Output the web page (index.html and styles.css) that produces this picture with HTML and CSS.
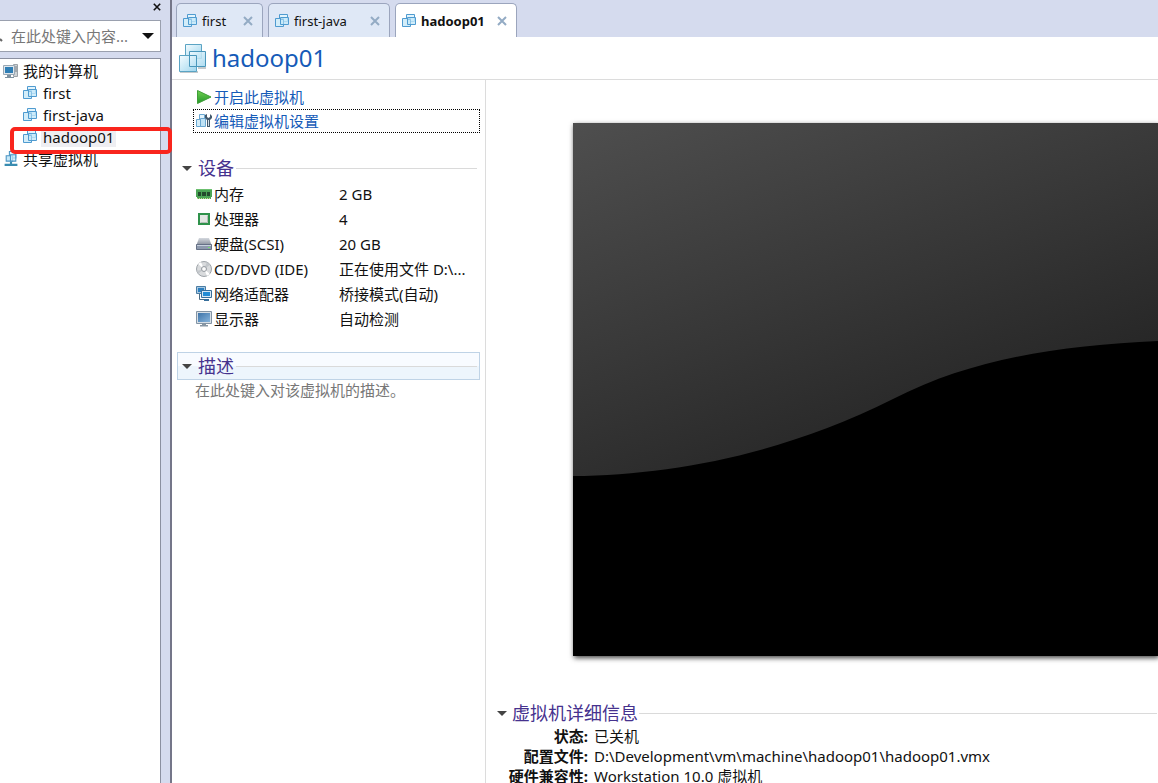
FILE: index.html
```html
<!DOCTYPE html>
<html lang="zh-CN">
<head>
<meta charset="utf-8">
<meta name="viewport" content="width=device-width, initial-scale=1">
<title>hadoop01</title>
<link rel="stylesheet" href="styles.css">
</head>
<body>
<svg class="defs" aria-hidden="true">
  <defs>
    <linearGradient id="pane" x1="0" y1="0" x2="1" y2="1"><stop offset="0" stop-color="#f4fcff"/><stop offset="1" stop-color="#9fd6ee"/></linearGradient>
    <linearGradient id="go" x1="0" y1="0" x2="0" y2="1"><stop offset="0" stop-color="#6fd04f"/><stop offset="1" stop-color="#23962a"/></linearGradient>
    <linearGradient id="metal" x1="0" y1="0" x2="0" y2="1"><stop offset="0" stop-color="#d5d9df"/><stop offset="1" stop-color="#878e9b"/></linearGradient>
    <linearGradient id="lcd" x1="0" y1="0" x2="1" y2="1"><stop offset="0" stop-color="#3f74a8"/><stop offset="1" stop-color="#86b4dc"/></linearGradient>
    <symbol id="vm" viewBox="0 0 14 14">
      <path d="M4.500.500h8v7h-8z" fill="#e3f4fc" stroke="#4f9bd0"/>
      <path d="M.500 4.500h8v8h-8z" fill="#d3edf9" stroke="#4f9bd0"/>
      <path d="M5.500 3.500h8v7h-8z" fill="#c6e9f9" fill-opacity=".8" stroke="#4f9bd0"/>
      <path d="M6 5.500h2.500V10" fill="none" stroke="#8cc3e6"/>
    </symbol>
    <symbol id="vm-large" viewBox="0 0 28 29">
      <path d="M1 28h18M27 24H19" stroke="#8b969c" stroke-width="2" opacity=".5"/>
      <path d="M6.500.500h16v14h-16z" fill="url(#pane)" stroke="#5ba4c4"/>
      <path d="M.500 11.500h17v16H.500z" fill="url(#pane)" stroke="#5ba4c4"/>
      <path d="M10.500 7.500h16v15h-16z" fill="url(#pane)" fill-opacity=".85" stroke="#4a97bb"/>
      <path d="M11 11.500h6.500V22" fill="none" stroke="#4a97bb"/>
    </symbol>
    <symbol id="close" viewBox="0 0 10 10"><path d="M1 1l8 8M9 1L1 9" stroke="currentColor" stroke-width="2" fill="none"/></symbol>
    <symbol id="down" viewBox="0 0 12 6"><path d="M0 0h12L6 6z" fill="currentColor"/></symbol>
    <symbol id="computer" viewBox="0 0 16 16">
      <path d="M10.500 1.500h4v12h-4z" fill="#cfd3d6" stroke="#9da3a8"/><path d="M12 4h2M12 6h2M12 8h2" stroke="#777f86"/>
      <path d="M.500 2.500h11v9H.500z" fill="#dfe6ec" stroke="#9aa8b4"/><path d="M2 4h8v6H2z" fill="#2f7eb5"/>
      <path d="M4 12h4v2h3v1H2v-1h2z" fill="#7e909e"/>
    </symbol>
    <symbol id="shared" viewBox="0 0 12 15">
      <path d="M4.500.500h6v6h-6z" fill="#e3f4fc" stroke="#4a94c4"/><path d="M1.500 4.500h6v5h-6z" fill="#c6e9f9" stroke="#4a94c4"/>
      <path d="M5.500 3.500h5v6h-5z" fill="#c6e9f9" fill-opacity=".7" stroke="#4a94c4"/>
      <path d="M6 10v3M0 13h12" stroke="#388bb0" stroke-width="2"/>
    </symbol>
    <symbol id="play" viewBox="0 0 16 16"><path d="M1.500 1.500L15 8 1.500 14.500z" fill="url(#go)" stroke="#3f9e38"/></symbol>
    <symbol id="edit" viewBox="0 0 16 16">
      <path d="M3.500 1.500h5v5h-5z" fill="#e3f4fc" stroke="#6aa7d1"/><path d="M.500 6.500h6v7h-6z" fill="#d3edf9" stroke="#6aa7d1"/><path d="M4.500 5.500h5v8h-5z" fill="#bfe2f5" stroke="#6aa7d1"/>
      <path d="M9 2l2-1v3l1.500 1L14 4V1l2 2v2l-2 2v7h-3V7L9 5z" fill="#43596c"/><path d="M12.500 7v6" stroke="#d4e0e9"/>
    </symbol>
    <symbol id="memory" viewBox="0 0 16 16">
      <path d="M0 3h16v8h-1v2H1v-2H0z" fill="#4ba455"/><path d="M2 6h3v4H2zM6 6h4v4H6zM11 6h3v4h-3z" fill="#234b2c"/><path d="M1 12.500h14" stroke="#c7dd91" stroke-dasharray="1 1"/><path d="M0 3.500h16" stroke="#6cc06f"/>
    </symbol>
    <symbol id="cpu" viewBox="0 0 16 16"><path d="M3 3h10v10H3z" fill="#e2e7e3" stroke="#2f924b" stroke-width="2"/><path d="M4.500 11.500h7v-7" fill="none" stroke="#b4bfb7"/></symbol>
    <symbol id="disk" viewBox="0 0 16 16"><path d="M3 2h10l2.500 7H.500z" fill="url(#metal)"/><path d="M.500 8.500h15v5H.500z" fill="#8e9aae" stroke="#667186"/><path d="M1 9.500h14" stroke="#c8d1df"/><path d="M12 11h2v1h-2z" fill="#75e26b"/></symbol>
    <symbol id="cd" viewBox="0 0 16 16"><circle cx="8" cy="8" r="7.500" fill="#d9dbdd" stroke="#9da3a8"/><path d="M8 8L2 3l3-2zM8 8l6 5-3 2z" fill="#fff"/><path d="M8 8l3-7 3 3zM8 8l-6 5-1-3z" fill="#c3c7cb"/><circle cx="8" cy="8" r="2.500" fill="#f4f4f4" stroke="#969ba1"/><circle cx="8" cy="8" r="1" fill="#fff"/></symbol>
    <symbol id="network" viewBox="0 0 16 16">
      <path d="M.500.500h9v7h-9z" fill="#a9c9e2" stroke="#4c7da3"/><path d="M2 2h6v4H2z" fill="#2c7fc0"/><path d="M3.500 8v5.500H8" fill="none" stroke="#4c6c84"/>
      <path d="M5.500 4.500h10v7h-10z" fill="#d5e7f5" stroke="#376f9b"/><path d="M7 6h7v4H7z" fill="#238cd5"/><path d="M8 13h5v2H8z" fill="#376f9b"/>
    </symbol>
    <symbol id="display" viewBox="0 0 16 16"><path d="M.500.500h15v12H.500z" fill="#d7dfe6" stroke="#8394a4"/><path d="M2 2h12v9H2z" fill="url(#lcd)"/><path d="M6 13h4v1h2v1.500H4V14h2z" fill="#8796a3"/></symbol>
    <linearGradient id="glass" gradientUnits="userSpaceOnUse" x1="60" y1="-20" x2="230" y2="430"><stop offset="0" stop-color="#4e4e4e"/><stop offset=".55" stop-color="#353535"/><stop offset="1" stop-color="#202020"/></linearGradient>
  </defs>
</svg>
<div class="app">
  <aside class="sidebar">
    <div class="sidebar-head"><button class="icon-button" aria-label="关闭"><svg class="close-side"><use href="#close"/></svg></button></div>
    <div class="search">
      <svg class="lens" viewBox="0 0 3 12" aria-hidden="true"><path d="M0 9l2 2" stroke="#666" stroke-width="2"/></svg>
      <input type="text" aria-label="搜索" placeholder="在此处键入内容...">
      <button class="icon-button" aria-label="搜索选项"><svg class="arrow-big"><use href="#down"/></svg></button>
    </div>
    <ul class="tree">
      <li class="node"><svg class="i16"><use href="#computer"/></svg><a href="#">我的计算机</a></li>
      <li class="node child"><svg class="i14"><use href="#vm"/></svg><a href="#">first</a></li>
      <li class="node child"><svg class="i14"><use href="#vm"/></svg><a href="#">first-java</a></li>
      <li class="node child"><svg class="i14"><use href="#vm"/></svg><a href="#" class="picked">hadoop01</a></li>
      <li class="node"><svg class="i16"><use href="#shared"/></svg><a href="#">共享虚拟机</a></li>
    </ul>
    <div class="marker"></div>
  </aside>
  <main class="main">
    <nav class="tabs">
      <div class="tab"><svg class="i14"><use href="#vm"/></svg><a href="#">first</a><button class="icon-button" aria-label="关闭 first"><svg class="close-tab"><use href="#close"/></svg></button></div>
      <div class="tab wide"><svg class="i14"><use href="#vm"/></svg><a href="#">first-java</a><button class="icon-button" aria-label="关闭 first-java"><svg class="close-tab"><use href="#close"/></svg></button></div>
      <div class="tab wide active"><svg class="i14"><use href="#vm"/></svg><a href="#">hadoop01</a><button class="icon-button" aria-label="关闭 hadoop01"><svg class="close-tab"><use href="#close"/></svg></button></div>
    </nav>
    <header class="title"><svg class="vm-large"><use href="#vm-large"/></svg><h1>hadoop01</h1></header>
    <div class="columns">
      <section class="settings">
        <div class="commands">
          <a class="command" href="#"><svg class="i16"><use href="#play"/></svg>开启此虚拟机</a>
          <a class="command focused" href="#"><svg class="i16"><use href="#edit"/></svg>编辑虚拟机设置</a>
        </div>
        <button class="section"><svg class="arrow"><use href="#down"/></svg>设备</button>
        <table class="devices">
          <tr><th scope="row"><span><svg class="i16"><use href="#memory"/></svg>内存</span></th><td>2 GB</td></tr>
          <tr><th scope="row"><span><svg class="i16"><use href="#cpu"/></svg>处理器</span></th><td>4</td></tr>
          <tr><th scope="row"><span><svg class="i16"><use href="#disk"/></svg>硬盘(SCSI)</span></th><td>20 GB</td></tr>
          <tr><th scope="row"><span><svg class="i16"><use href="#cd"/></svg>CD/DVD (IDE)</span></th><td>正在使用文件 D:\...</td></tr>
          <tr><th scope="row"><span><svg class="i16"><use href="#network"/></svg>网络适配器</span></th><td>桥接模式(自动)</td></tr>
          <tr><th scope="row"><span><svg class="i16"><use href="#display"/></svg>显示器</span></th><td>自动检测</td></tr>
        </table>
        <button class="section hovered"><svg class="arrow"><use href="#down"/></svg>描述</button>
        <p class="hint">在此处键入对该虚拟机的描述。</p>
      </section>
      <section class="overview">
        <div class="screen">
          <svg viewBox="0 0 585 533" preserveAspectRatio="xMinYMin slice" role="img" aria-label="虚拟机屏幕">
            <path d="M0 0h585v533H0z" fill="#000"/>
            <path d="M0 0H585V218C485 223 400 235 320 276C210 331 100 352 0 353z" fill="url(#glass)"/>
          </svg>
        </div>
        <button class="section"><svg class="arrow"><use href="#down"/></svg>虚拟机详细信息</button>
        <dl class="facts">
          <dt>状态:</dt><dd>已关机</dd>
          <dt>配置文件:</dt><dd>D:\Development\vm\machine\hadoop01\hadoop01.vmx</dd>
          <dt>硬件兼容性:</dt><dd>Workstation 10.0 虚拟机</dd>
        </dl>
      </section>
    </div>
  </main>
</div>
</body>
</html>
```
FILE: styles.css
```css
* { box-sizing: border-box; }
body {
  margin: 0;
  overflow: hidden;
  font: 15px/22px "Noto Sans", "Noto Sans CJK SC", sans-serif;
  color: #111;
  background: #d5dbee;
}
a { color: inherit; text-decoration: none; }
button { font: inherit; color: inherit; border: 0; background: none; padding: 0; }
svg { display: block; flex: none; }
.defs { position: absolute; width: 0; height: 0; }
.app { display: flex; height: 100vh; }
.i14 { width: 14px; height: 14px; }
.i16 { width: 16px; height: 16px; }
.icon-button { display: flex; align-items: center; }

.sidebar {
  position: relative;
  flex: none;
  display: flex;
  flex-direction: column;
  width: 172px;
  padding-right: 9px;
  border-right: 2px solid #747689;
}
.sidebar-head { display: flex; justify-content: flex-end; height: 20px; padding: 3px 0 0; }
.sidebar-head .icon-button { align-self: flex-start; height: 8px; }
.close-side { width: 8px; height: 8px; }
.search {
  display: flex;
  align-items: center;
  height: 32px;
  padding-right: 6px;
  background: #fff;
  border: 1px solid #9aa0ae;
  border-left: 0;
}
.lens { width: 3px; height: 12px; }
.search input {
  flex: 1;
  min-width: 0;
  padding: 0 0 0 8px;
  border: 0;
  outline: 0;
  font: inherit;
  background: none;
}
.search input::placeholder { color: #777; opacity: 1; }
.arrow-big { width: 12px; height: 6px; }
.tree {
  flex: 1;
  margin: 6px 0 0;
  padding: 1px 0 0;
  list-style: none;
  background: #fff;
  border: 1px solid #8b90a0;
  border-width: 1px 1px 0 0;
}
.node { display: flex; align-items: center; gap: 4px; height: 22px; padding-left: 3px; }
.child { padding-left: 23px; }
.child a { padding: 0 2px; line-height: 20px; }
.picked { background: #eeeef2; }
.marker {
  position: absolute;
  left: 10px;
  top: 127px;
  width: 162px;
  height: 27px;
  border: 4px solid #f9251d;
  border-radius: 5px;
  z-index: 1;
  pointer-events: none;
}

.main { flex: 1; min-width: 0; display: flex; flex-direction: column; background: #fff; }
.tabs {
  display: flex;
  gap: 5px;
  height: 37px;
  padding: 3px 4px 0;
  background: #d5dbee;
  font: 13px/18px "Noto Sans", "Noto Sans CJK SC", sans-serif;
}
.tab {
  display: flex;
  align-items: center;
  gap: 5px;
  min-width: 87px;
  padding: 0 9px 0 6px;
  background: #dfe8f6;
  border: 1px solid #9ba5bd;
  border-bottom: 0;
  border-radius: 5px 5px 0 0;
}
.tab.wide { min-width: 122px; }
.tab .icon-button { margin-left: auto; color: #93abc4; }
.tab.active { background: #fff; font-weight: 700; }
.close-tab { width: 10px; height: 10px; }
.title {
  display: flex;
  align-items: center;
  gap: 5px;
  height: 43px;
  padding-left: 7px;
  border-bottom: 1px solid #dcdcdc;
}
.vm-large { width: 28px; height: 29px; }
.title h1 { margin: 0; font: 24px/40px "Noto Sans", sans-serif; color: #155bb8; }
.columns { flex: 1; min-height: 0; display: flex; }

.settings { flex: none; width: 314px; padding: 5px 5px 0; border-right: 1px solid #dcdcdc; }
.commands { margin: 0 0 21px 16px; }
.command { display: flex; align-items: center; gap: 2px; height: 24px; padding-left: 2px; border: 1px solid transparent; color: #155bb8; }
.command.focused { border: 1px dotted #000; }
.section {
  display: flex;
  align-items: center;
  gap: 6px;
  width: 100%;
  height: 28px;
  padding: 0 2px 0 4px;
  border: 1px solid transparent;
  font-size: 18px;
  line-height: 26px;
  color: #46328e;
  white-space: nowrap;
}
.section::after { content: ""; flex: 1; height: 1px; margin-left: -4px; background: #dadada; }
.section.hovered { border-color: #bfd3e6; background: linear-gradient(#f8fbff 50%, #edf5fc 50%); }
.arrow { width: 10px; height: 5px; color: #444; }
.devices { width: 100%; margin: -1px 0 21px; border-spacing: 0; }
.devices th, .devices td { height: 25px; padding: 0; font-weight: 400; text-align: left; white-space: nowrap; }
.devices th { width: 162px; padding-left: 19px; }
.devices th span { display: flex; align-items: center; gap: 2px; }
.hint { margin: -1px 0 0; padding-left: 18px; color: #777; }

.overview { flex: 1; min-width: 0; padding: 43px 0 0 10px; }
.screen { margin: 0 0 43px 77px; box-shadow: 1px 2px 5px #444; }
.screen svg { width: 100%; height: 533px; }
.overview .section { gap: 5px; padding-left: 0; padding-right: 0; }
.facts { display: grid; grid-template-columns: 92px 1fr; column-gap: 6px; margin: -1px 0 0; line-height: 20px; white-space: nowrap; }
.facts dt { font-weight: 700; text-align: right; }
.facts dd { margin: 0; }
```
